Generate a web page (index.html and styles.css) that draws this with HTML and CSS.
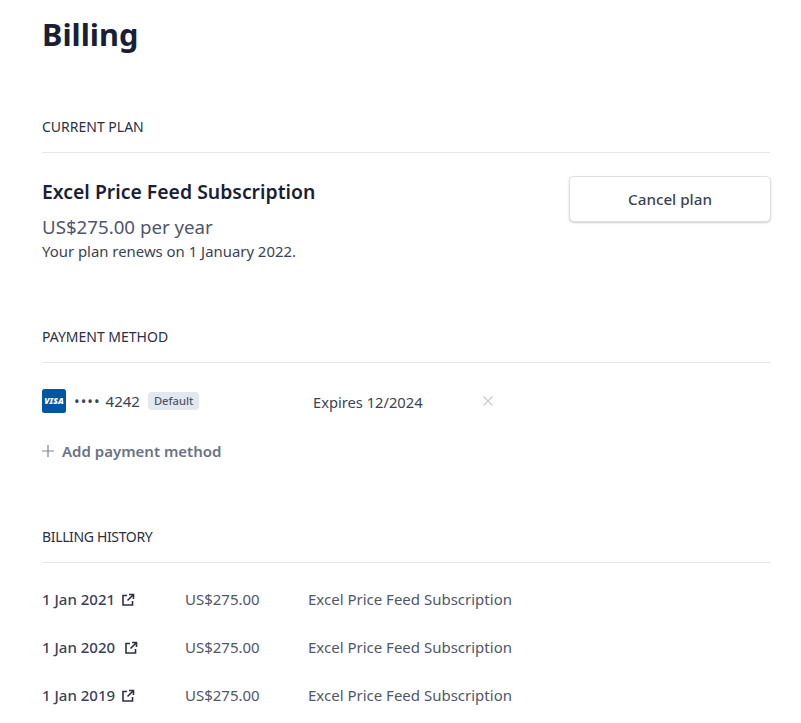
FILE: index.html
```html
<!DOCTYPE html>
<html lang="en">
<head>
<meta charset="utf-8">
<title>Billing</title>
<link rel="stylesheet" href="styles.css">
</head>
<body>
<main class="page">
  <h1 class="title">Billing</h1>

  <section class="section plan-section">
    <h2 class="section-head">CURRENT PLAN</h2>
    <div class="plan">
      <div class="plan-info">
        <div class="plan-name">Excel Price Feed Subscription</div>
        <div class="plan-price">US$275.00 per year</div>
        <div class="plan-renew">Your plan renews on 1 January 2022.</div>
      </div>
      <button class="cancel" type="button">Cancel plan</button>
    </div>
  </section>

  <section class="section payment-section">
    <h2 class="section-head">PAYMENT METHOD</h2>
    <div class="card-row">
      <div class="card-main">
        <svg class="visa" width="24" height="24" viewBox="0 0 24 24" aria-hidden="true"><rect width="24" height="24" rx="2.5" fill="#02559f"/><text x="12" y="15" text-anchor="middle" class="visa-text">VISA</text></svg>
        <span class="dots">••••</span>
        <span class="last4">4242</span>
        <span class="badge">Default</span>
      </div>
      <span class="expires">Expires 12/2024</span>
      <svg class="remove" width="12" height="12" viewBox="0 0 12 12" aria-hidden="true"><path d="M1.500 1.500l9 9M10.500 1.500l-9 9" stroke="#c3c9d3" stroke-width="1.100" fill="none"/></svg>
    </div>
    <div class="add">
      <svg width="12" height="12" viewBox="0 0 12 12" aria-hidden="true"><path d="M6 0v12M0 6h12" stroke="#7b8496" stroke-width="1.200" fill="none"/></svg>
      <span>Add payment method</span>
    </div>
  </section>

  <section class="section history-section">
    <h2 class="section-head section-head-tight">BILLING HISTORY</h2>
    <div class="invoices">
      <div class="invoice">
        <div class="inv-date"><span>1 Jan 2021</span><svg class="ext" width="14" height="14" viewBox="0 0 14 14" aria-hidden="true"><path d="M6 2.500H2v9.500h9.500V8M8 1.500h4.500V6M12.500 1.500L6.500 7.500" stroke="#2c3145" stroke-width="1.600" fill="none"/></svg></div>
        <div class="inv-amt">US$275.00</div>
        <div class="inv-desc">Excel Price Feed Subscription</div>
      </div>
      <div class="invoice">
        <div class="inv-date inv-date-wide"><span>1 Jan 2020</span><svg class="ext" width="14" height="14" viewBox="0 0 14 14" aria-hidden="true"><path d="M6 2.500H2v9.500h9.500V8M8 1.500h4.500V6M12.500 1.500L6.500 7.500" stroke="#2c3145" stroke-width="1.600" fill="none"/></svg></div>
        <div class="inv-amt">US$275.00</div>
        <div class="inv-desc">Excel Price Feed Subscription</div>
      </div>
      <div class="invoice">
        <div class="inv-date"><span>1 Jan 2019</span><svg class="ext" width="14" height="14" viewBox="0 0 14 14" aria-hidden="true"><path d="M6 2.500H2v9.500h9.500V8M8 1.500h4.500V6M12.500 1.500L6.500 7.500" stroke="#2c3145" stroke-width="1.600" fill="none"/></svg></div>
        <div class="inv-amt">US$275.00</div>
        <div class="inv-desc">Excel Price Feed Subscription</div>
      </div>
    </div>
  </section>
</main>
</body>
</html>
```

FILE: styles.css
```css
* { box-sizing: border-box; }
html, body { margin: 0; padding: 0; background: #fff; }
body {
  font-family: "Noto Sans", "Open Sans", sans-serif;
  color: #1a1f36;
  overflow: hidden;
  height: 723px;
}
.page { padding: 13px 30px 0 42px; }
.title { margin: 0; font-size: 30.7px; line-height: 42px; font-weight: 700; color: #1a1f36; }
.section-head {
  margin: 0 1px 0 0;
  padding-bottom: 16px;
  border-bottom: 1px solid #e3e8ee;
  font-size: 14px;
  line-height: 18px;
  font-weight: 400;
  color: #2a2f45;
}
.section-head-tight { letter-spacing: -.35px; }
.plan-section { margin-top: 63px; }
.plan { display: flex; justify-content: space-between; align-items: flex-start; padding-top: 23px; }
.plan-name { margin-top: 3px; font-size: 19.4px; line-height: 26px; font-weight: 600; color: #1a1f36; }
.plan-price { margin-top: 10px; font-size: 18.7px; line-height: 24px; color: #4f566b; }
.plan-renew { font-size: 14.9px; line-height: 23px; color: #3c4257; margin-top: 1px; }
.cancel {
  width: 202px;
  height: 46px;
  background: #fff;
  border: 1px solid #dcdfe5;
  border-radius: 5px;
  box-shadow: 0 1px 2px rgba(60, 66, 87, .25);
  font: 500 15.2px "Noto Sans", sans-serif;
  color: #3c4257;
}
.payment-section { margin-top: 65px; }
.card-row { display: flex; align-items: center; padding-top: 26px; height: 50px; }
.card-main { display: flex; align-items: center; width: 271px; }
.visa { display: block; }
.visa-text { font: italic 900 8.5px "Noto Sans", sans-serif; fill: #fff; }
.dots { margin-left: 8px; font-size: 15px; letter-spacing: 1px; color: #3c4257; }
.last4 { margin-left: 5px; font-size: 15px; color: #3c4257; }
.badge {
  margin-left: 8px;
  padding: 0 6px;
  height: 18px;
  background: #e3e8ee;
  border-radius: 4px;
  font-size: 11.2px;
  line-height: 18px;
  color: #4f566b;
  font-weight: 500;
}
.expires { margin-top: 1px; font-size: 14.7px; color: #3c4257; width: 169px; }
.remove { display: block; }
.add { display: flex; align-items: center; gap: 8px; margin-top: 28px; font-size: 15px; line-height: 20px; font-weight: 600; color: #697386; }
.history-section { margin-top: 67px; }
.invoices { padding-top: 12px; }
.invoice { display: flex; align-items: center; height: 48px; font-size: 15px; }
.inv-date { width: 143px; display: flex; align-items: center; gap: 6px; font-weight: 500; color: #3c4257; }
.inv-date-wide { gap: 9px; }
.ext { display: block; margin-top: 1px; }
.inv-amt { width: 123px; color: #4f566b; }
.inv-desc { color: #4f566b; }
```
